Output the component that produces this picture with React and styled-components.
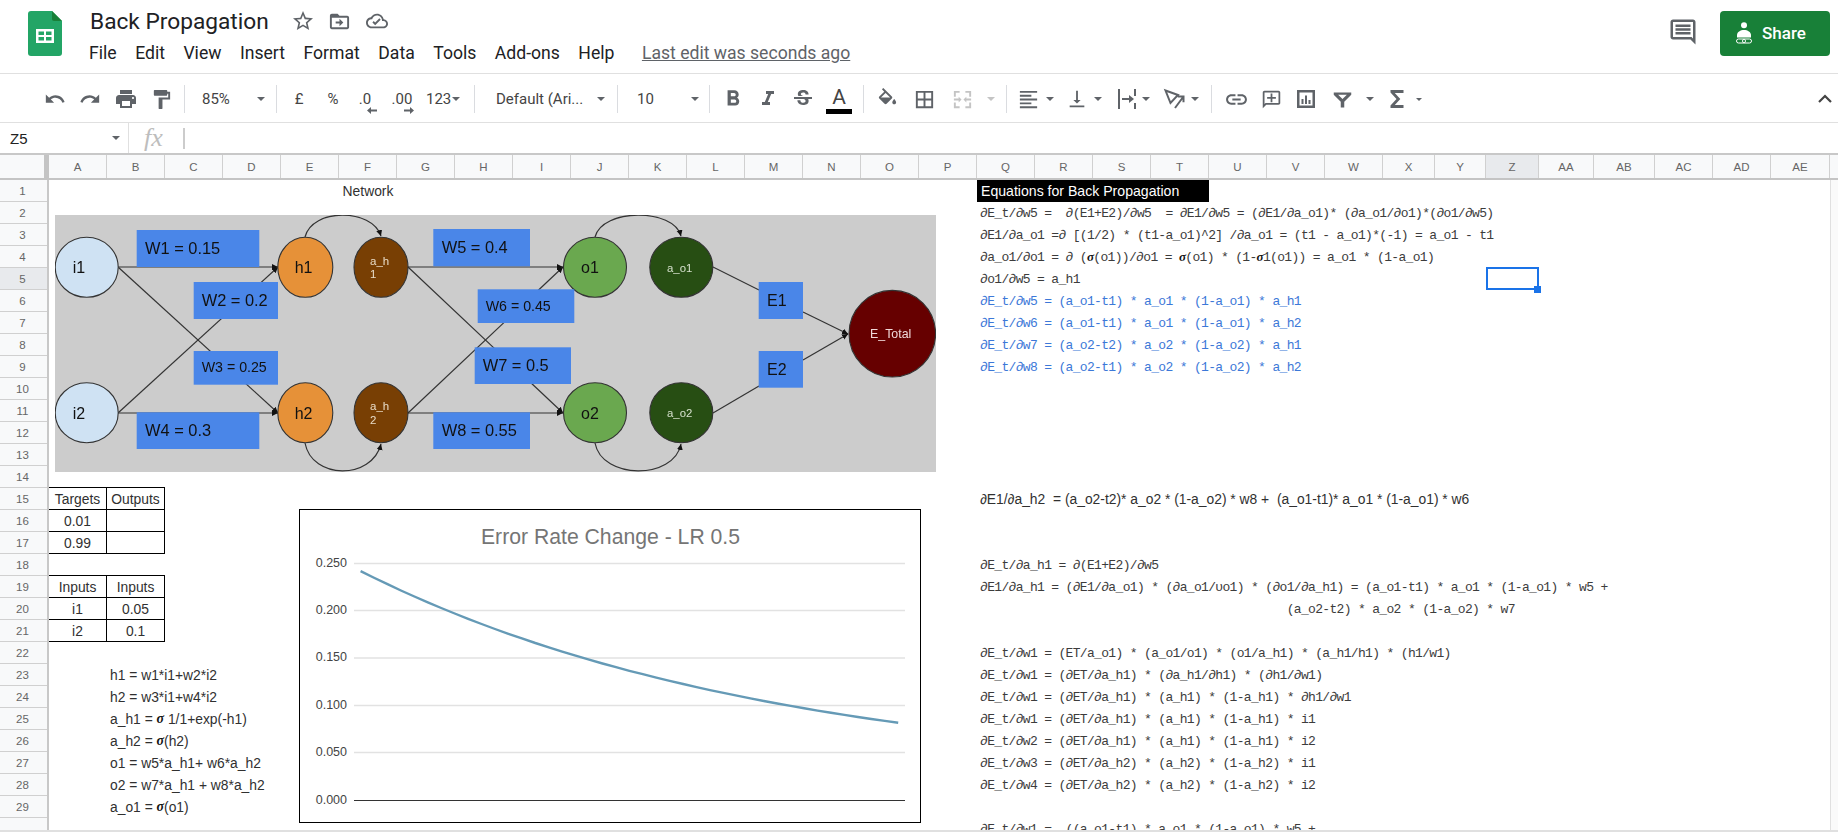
import React from 'react';
import styled, { createGlobalStyle } from 'styled-components';

const Global = createGlobalStyle`
  html, body { margin: 0; padding: 0; background: #fff; overflow: hidden; }
  * { box-sizing: border-box; }
  #root { height: 832px; }
`;

const Page = styled.div`
  width: 1838px; height: 832px; display: flex; flex-direction: column; overflow: hidden;
  font-family: "Liberation Sans", Arial, sans-serif; color: #333;
`;

/* ---------- header ---------- */
const Header = styled.header`
  height: 73px; flex: none; display: flex; align-items: flex-start; padding: 11px 8px 0 28px;
`;
const Logo = styled.svg` width: 34px; height: 45px; flex: none; `;
const TitleBlock = styled.div` margin-left: 27px; margin-top: -3px; display: flex; flex-direction: column; flex: 1; `;
const TitleRow = styled.div` display: flex; align-items: center; height: 24px; margin-top: 1px; `;
const Title = styled.div` font: 400 22.7px Roboto, sans-serif; color: #202124; width: 201px; margin-left: 1px; `;
const HeadIcon = styled.svg` width: ${p => p.$s || 24}px; height: ${p => p.$s || 24}px; fill: #5f6368; margin-right: ${p => p.$mr || 0}px; flex: none; `;
const MenuRow = styled.nav` display: flex; align-items: center; gap: 18.5px; margin-top: 8px; height: 24px; font: 400 17.6px Roboto, sans-serif; color: #202124; `;
const LastEdit = styled.span` color: #5f6368; text-decoration: underline; margin-left: 9px; `;
const CommentBtn = styled.svg` width: 30px; height: 30px; fill: #5f6368; margin: 6px 22px 0 0; flex: none; `;
const ShareBtn = styled.div`
  width: 110px; height: 45px; background: #188038; border-radius: 4px; display: flex; align-items: center;
  padding: 0 0 2px 16px; gap: 10px; color: #fff; font: 500 17px Roboto, sans-serif; flex: none;
`;
const ShareIcon = styled.svg` width: 16px; height: 22px; flex: none; `;

/* ---------- toolbar ---------- */
const Toolbar = styled.div`
  height: 50px; flex: none; display: flex; align-items: center; padding: 2px 4px 0 38px;
  border-top: 1px solid #e0e0e0; border-bottom: 1px solid #e0e0e0;
  color: #444; font: 400 15px Roboto, sans-serif;
`;
const Tool = styled.div` width: ${p => p.$w}px; display: flex; justify-content: center; align-items: center; flex: none; height: 32px; `;
const CaretTool = styled.div` width: ${p => p.$w}px; padding-left: ${p => p.$pad}px; display: flex; align-items: center; gap: ${p => p.$gap}px; flex: none; height: 32px; `;
const Drop = styled.div` width: ${p => p.$w}px; padding: 0 ${p => p.$r}px 0 ${p => p.$l}px; display: flex; align-items: center; justify-content: space-between; flex: none; height: 32px; white-space: nowrap; `;
const Sep = styled.div` width: 1px; height: 28px; background: #dadce0; margin: 0 5px; flex: none; `;
const Icon = styled.svg` width: ${p => p.$s || 24}px; height: ${p => p.$s || 24}px; fill: ${p => p.$c || '#5f6368'}; flex: none; `;
const StrokeIcon = styled.svg` width: 24px; height: 24px; fill: none; stroke: #5f6368; stroke-width: 2; flex: none; `;
const Caret = styled.span`
  width: 0; height: 0; flex: none; border-left: ${p => p.$s || 4.5}px solid transparent; border-right: ${p => p.$s || 4.5}px solid transparent;
  border-top: ${p => p.$s || 4.5}px solid ${p => p.$c || '#5f6368'};
`;
const ToolText = styled.span` color: #444; `;
const Deci = styled.div` position: relative; color: #444; line-height: 16px; margin-top: -1px; `;
const DeciArrow = styled.svg` position: absolute; right: ${p => p.$right}px; top: 16px; width: 10px; height: 7px; fill: #5f6368; `;
const ColorA = styled.div` display: flex; flex-direction: column; align-items: center; width: 26px; `;
const ColorLetter = styled.span` font: 400 21px Roboto, sans-serif; line-height: 21px; color: #444; margin-top: 2px; `;
const ColorBar = styled.span` width: 26px; height: 5px; background: #000; margin-top: 1px; `;
const Collapse = styled.svg` width: 18px; height: 18px; margin-left: auto; fill: none; stroke: #444; stroke-width: 2.2; `;

/* ---------- formula bar ---------- */
const FormulaBar = styled.div` height: 30px; flex: none; display: flex; align-items: center; position: relative; `;
const NameBox = styled.div`
  width: 129px; height: 100%; padding: 0 8px 0 10px; display: flex; align-items: center; justify-content: space-between;
  border-right: 1px solid #e0e0e0; font-size: 15px; color: #222; flex: none;
`;
const Fx = styled.div` font: italic 400 26px "Liberation Serif", serif; color: #bdbdbd; width: 54px; padding-left: 15px; `;
const FxLine = styled.div` width: 2px; height: 21px; background: #ccc; `;

/* ---------- column headers ---------- */
const COLS = [...'ABCDEFGHIJKLMNOPQRSTUVWXYZ', 'AA', 'AB', 'AC', 'AD', 'AE'];
const WIDTHS = COLS.map((c, i) => (i < 23 ? 58 : [52, 51, 53, 55, 61, 58, 58, 59][i - 23]));
const TEMPLATE = WIDTHS.map(w => `${w}px`).join(' ');

const ColumnHeader = styled.div`
  height: 27px; flex: none; display: flex; background: #f8f9fa;
  border-top: 2px solid #c8c8c8; border-bottom: 2px solid #c4c4c4;
`;
const Corner = styled.div` width: 49px; flex: none; border-right: 5px solid #c4c4c4; `;
const ColumnCells = styled.div` display: grid; grid-template-columns: ${TEMPLATE}; flex: none; `;
const ColCell = styled.div`
  border-right: 1px solid #d0d0d0; display: flex; align-items: center; justify-content: center;
  font-size: 11.5px; color: #666; background: ${p => (p.$active ? '#e8eaed' : 'transparent')};
`;

/* ---------- sheet ---------- */
const Body = styled.div` flex: 1; display: flex; min-height: 0; overflow: hidden; border-bottom: 2px solid #e0e0e0; `;
const RowHeader = styled.div` width: 49px; flex: none; display: flex; flex-direction: column; background: #f8f9fa; border-right: 2px solid #c8c8c8; `;
const RowCell = styled.div`
  height: 22px; flex: none; border-bottom: 1px solid #d0d0d0; display: flex; align-items: center; justify-content: center;
  font-size: 11.5px; color: #666; padding-right: 2px; background: ${p => (p.$active ? '#e8eaed' : 'transparent')};
`;
const Canvas = styled.div`
  position: relative; display: grid; grid-template-columns: ${TEMPLATE}; grid-auto-rows: 22px; flex: none; width: 1781px;
`;
const Scroll = styled.div` flex: 1; border-left: 1px solid #e0e0e0; background: #fafafa; `;

const Cell = styled.div`
  grid-column: ${p => p.$c}; grid-row: ${p => p.$r}; min-width: 0; white-space: pre; display: flex; align-items: center;
  font-size: 13.85px; color: #303030; padding-left: 3px;
`;
const CenterCell = styled(Cell)` justify-content: center; padding-left: 0; `;
const BoxCell = styled(CenterCell)`
  border-right: 1px solid #000; border-bottom: 1px solid #000;
  box-shadow: ${p => (p.$top ? '0 -1px 0 #000' : 'none')};
`;
const BannerCell = styled(Cell)`
  grid-column: ${p => p.$c} / span 4; background: #000; color: #fff; padding-left: 4px; font-size: 14.1px;
`;
const MonoCell = styled(Cell)`
  font-family: "Liberation Mono", monospace; font-size: 13px; letter-spacing: -0.67px; color: ${p => (p.$blue ? '#3c78d8' : '#3c3c3c')};
`;
const Sigma = styled.b` font-style: italic; color: #111; font-family: "Liberation Serif", serif; `;
const Selected = styled.div`
  grid-column: ${p => p.$c}; grid-row: ${p => p.$r}; position: relative; margin: -1px 0 0 0; border: 2px solid #1a73e8;
  &::after { content: ''; position: absolute; right: -4px; bottom: -5px; width: 7px; height: 7px; background: #1a73e8; }
`;
const Diagram = styled.svg`
  position: absolute; left: 6px; top: 35px; width: 881px; height: 257px; filter: blur(0.4px);
  font-family: "Liberation Sans", sans-serif;
`;
const ChartFrame = styled.svg`
  position: absolute; left: 250px; top: 329px; width: 622px; height: 314px; background: #fff; border: 1px solid #000;
  font-family: "Liberation Sans", sans-serif;
`;

const P = {
  undo: 'M12.5 8c-2.65 0-5.05.99-6.9 2.6L2 7v9h9l-3.62-3.62c1.39-1.16 3.16-1.88 5.12-1.88 3.54 0 6.55 2.31 7.6 5.5l2.37-.78C21.08 11.03 17.15 8 12.5 8z',
  redo: 'M18.4 10.6C16.55 8.99 14.15 8 11.5 8c-4.65 0-8.58 3.03-9.96 7.22L3.9 16c1.05-3.19 4.05-5.5 7.6-5.5 1.95 0 3.73.72 5.12 1.88L13 16h9V7l-3.6 3.6z',
  print: 'M19 8H5c-1.66 0-3 1.34-3 3v6h4v4h12v-4h4v-6c0-1.66-1.34-3-3-3zm-3 11H8v-5h8v5zm3-7c-.55 0-1-.45-1-1s.45-1 1-1 1 .45 1 1-.45 1-1 1zm-1-9H6v4h12V3z',
  paint: 'M18 4V3c0-.55-.45-1-1-1H5c-.55 0-1 .45-1 1v4c0 .55.45 1 1 1h12c.55 0 1-.45 1-1V6h1v4H9v11c0 .55.45 1 1 1h2c.55 0 1-.45 1-1v-9h8V4h-3z',
  bold: 'M15.6 10.79c.97-.67 1.65-1.77 1.65-2.79 0-2.26-1.75-4-4-4H7v14h7.04c2.09 0 3.71-1.7 3.71-3.79 0-1.52-.86-2.82-2.15-3.42zM10 6.5h3c.83 0 1.5.67 1.5 1.5s-.67 1.5-1.5 1.5h-3v-3zm3.5 9H10v-3h3.5c.83 0 1.5.67 1.5 1.5s-.67 1.5-1.5 1.5z',
  italic: 'M10 4v3h2.21l-3.42 8H6v3h8v-3h-2.21l3.42-8H18V4z',
  strike: 'M6.85 7.08C6.85 4.37 9.45 3 12.24 3c1.64 0 3 .49 3.9 1.28.77.65 1.46 1.73 1.46 3.24h-3.01c0-.31-.05-.59-.15-.85-.29-.86-1.2-1.28-2.25-1.28-1.86 0-2.34 1.02-2.34 1.7 0 .48.25.88.74 1.21.38.25.77.48 1.41.7H7.39c-.21-.34-.54-.89-.54-1.92zM21 12v-2H3v2h9.62c1.15.45 1.96.75 1.96 1.97 0 1-.81 1.67-2.28 1.67-1.54 0-2.93-.54-2.93-2.51H6.4c0 .55.08 1.13.24 1.58.81 2.29 3.29 3.3 5.67 3.3 2.27 0 5.3-.89 5.3-4.05 0-.3-.01-1.16-.48-1.94H21V12z',
  fill: 'M16.56 8.94L7.62 0 6.21 1.41l2.38 2.38-5.15 5.15c-.59.59-.59 1.54 0 2.12l5.5 5.5c.29.29.68.44 1.06.44s.77-.15 1.06-.44l5.5-5.5c.59-.58.59-1.53 0-2.12zM5.21 10L10 5.21 14.79 10H5.21zM19 11.5s-2 2.17-2 3.5c0 1.1.9 2 2 2s2-.9 2-2c0-1.33-2-3.5-2-3.5z',
  borders: 'M3 3v18h18V3H3zm8 16H5v-6h6v6zm0-8H5V5h6v6zm8 8h-6v-6h6v6zm0-8h-6V5h6v6z',
  merge: 'M3 3h6v2H5v4H3z M15 3h6v6h-2V5h-4z M3 15h2v4h4v2H3z M19 15h2v6h-6v-2h4z M3 11h5V9l3 3-3 3v-2H3z M21 11h-5V9l-3 3 3 3v-2h5z',
  align: 'M15 15H3v2h12v-2zm0-8H3v2h12V7zM3 13h18v-2H3v2zm0 8h18v-2H3v2zM3 3v2h18V3H3z',
  valign: 'M16 13h-3V3h-2v10H8l4 4 4-4zM4 19v2h16v-2H4z',
  wrap: 'M3 2h2v20H3z M19 2h2v7h-2z M19 16h2v6h-2z M7 11h7V8l5 4-5 4v-3H7z',
  rotate: 'M2.500 3.500L15 8l-7.500 8z M12 21L20.500 9.500 M14.800 9.500h5.700v5.700',
  link: 'M3.9 12c0-1.71 1.39-3.1 3.1-3.1h4V7H7c-2.76 0-5 2.24-5 5s2.24 5 5 5h4v-1.9H7c-1.71 0-3.1-1.39-3.1-3.1zM8 13h8v-2H8v2zm9-6h-4v1.9h4c1.71 0 3.1 1.39 3.1 3.1s-1.39 3.1-3.1 3.1h-4V17h4c2.76 0 5-2.24 5-5s-2.24-5-5-5z',
  addComment: 'M20 2H4c-1.1 0-2 .9-2 2v18l4-4h14c1.1 0 2-.9 2-2V4c0-1.1-.9-2-2-2zm0 14H5.17L4 17.17V4h16v12z M13 5h-2v4H7v2h4v4h2v-4h4V9h-4z',
  chart: 'M3 3h18v18H3z M5.500 5.500v13h13v-13z M7.500 12h2v5h-2z M11 8.500h2V17h-2z M14.500 13h2v4h-2z',
  filter: 'M2 4h20v2.500l-8 8V21h-4v-6.500l-8-8z M7 6.500l5 5 5-5z',
  sigma: 'M18.500 3H5.500v2.500L11.500 12l-6 6.500V21h13v-3H9.800l5.500-6-5.500-6h8.700z',
  star: 'M22 9.24l-7.19-.62L12 2 9.19 8.63 2 9.24l5.46 4.73L5.82 21 12 17.27 18.18 21l-1.63-7.03L22 9.24zM12 15.4l-3.76 2.27 1-4.28-3.32-2.88 4.38-.38L12 6.1l1.71 4.04 4.38.38-3.32 2.88 1 4.28L12 15.4z',
  folder: 'M20 6h-8l-2-2H4c-1.1 0-2 .9-2 2v12c0 1.1.9 2 2 2h16c1.1 0 2-.9 2-2V8c0-1.1-.9-2-2-2zm0 12H4V8h16v10z M12 17l4-4-4-4v3H8v2h4z',
  cloud: 'M19.35 10.04C18.67 6.59 15.64 4 12 4 9.11 4 6.6 5.64 5.35 8.04 2.34 8.36 0 10.91 0 14c0 3.31 2.69 6 6 6h13c2.76 0 5-2.24 5-5 0-2.64-2.05-4.78-4.65-4.96zM19 18H6c-2.21 0-4-1.79-4-4s1.79-4 4-4h.71C7.37 7.69 9.48 6 12 6c3.04 0 5.5 2.46 5.5 5.5v.5H19c1.66 0 3 1.34 3 3s-1.34 3-3 3z M10 16.500l-3-3 1.400-1.400 1.600 1.600 4.600-4.600 1.400 1.400z',
  comment: 'M22 4c0-1.1-.9-2-2-2H4c-1.1 0-2 .9-2 2v12c0 1.1.9 2 2 2h14l4 4V4zm-2 13.17L18.83 16H4V4h16v13.17zM6 12h12v2H6zm0-3h12v2H6zm0-3h12v2H6z',
};
const Ic = ({ d, s, c, evenodd }) => (
  <Icon viewBox="0 0 24 24" $s={s} $c={c}><path d={d} fillRule={evenodd ? 'evenodd' : 'nonzero'} /></Icon>
);

const ROW = { stroke: '#333', strokeWidth: 1.2 };
const ELLIPSES = [
  [86.7, 267.3, 31.5, 30, '#cfe2f3'], [86.7, 412.7, 31.5, 30, '#cfe2f3'],
  [305.3, 267.3, 27.5, 30, '#e69138'], [305.3, 412.7, 27.5, 30, '#e69138'],
  [381, 267.3, 27, 30, '#783f04'], [381, 412.7, 27, 30, '#783f04'],
  [595, 267.3, 31.5, 30, '#6aa84f'], [595, 412.7, 31.5, 30, '#6aa84f'],
  [681.3, 267.3, 31.5, 30, '#274e13'], [681.3, 412.7, 31.5, 30, '#274e13'],
  [892.3, 333.7, 43.3, 43.3, '#660000'],
];
const LINES = [
  [118, 267, 278, 267, 1], [118, 267, 278, 413, 1], [118, 413, 278, 267, 1], [118, 413, 278, 413, 1],
  [408, 267, 563, 267, 1], [408, 267, 563, 413, 1], [408, 413, 563, 267, 1], [408, 413, 563, 413, 1],
  [713, 267, 759, 290, 0], [713, 413, 759, 386, 0], [803, 312, 848, 334, 1], [803, 360, 848, 334, 1],
];
const ARCS = [
  'M305 237 C 312 208, 372 208, 381 236', 'M595 237 C 602 208, 674 208, 681 236',
  'M305 443 C 312 480, 372 480, 381 444', 'M595 443 C 602 480, 674 480, 681 444',
];
const BOXES = [
  [136.7, 230, 122.6, 37], [193.7, 282, 84.3, 37], [193.7, 351, 84.3, 33.7], [136.7, 412.3, 122.6, 36.7],
  [433.3, 229, 96.7, 37.3], [477.7, 289.3, 96.6, 33.7], [474.7, 347.3, 96.3, 36.7], [433.3, 412.3, 96.7, 36.7],
  [758.7, 282, 44.3, 37], [758.7, 351, 44.3, 36.7],
];
const LABELS = [
  [145, 248, 'W1 = 0.15', 16.4], [201.7, 300, 'W2 = 0.2', 16.4], [201.7, 367.3, 'W3 = 0.25', 14.2], [145, 430, 'W4 = 0.3', 16.4],
  [441.7, 247.3, 'W5 = 0.4', 16.4], [485.7, 305.7, 'W6 = 0.45', 14.2], [482.7, 365.3, 'W7 = 0.5', 16.4], [441.7, 430, 'W8 = 0.55', 16.4],
  [72.7, 267.5, 'i1', 16], [72.7, 413, 'i2', 16], [294.7, 267.5, 'h1', 16], [294.7, 413, 'h2', 16],
  [581, 267.5, 'o1', 16], [581, 413, 'o2', 16], [767, 300, 'E1', 16], [767, 369, 'E2', 16],
  [370, 260.7, 'a_h', 11.5, '#e8dcc8'], [370, 274.3, '1', 11.5, '#e8dcc8'], [370, 406, 'a_h', 11.5, '#e8dcc8'], [370, 420, '2', 11.5, '#e8dcc8'],
  [667, 267.5, 'a_o1', 11.4, '#d5e0cc'], [667, 413, 'a_o2', 11.4, '#d5e0cc'], [870, 334, 'E_Total', 12.4, '#f0d8d8'],
];

const NetworkDiagram = () => (
  <Diagram viewBox="55 215 881 257">
    <defs>
      <marker id="ah" markerWidth="7" markerHeight="7" refX="6" refY="3" orient="auto" markerUnits="userSpaceOnUse">
        <path d="M0 0 L6 3 L0 6 z" fill="#111" />
      </marker>
    </defs>
    <rect x="55" y="215" width="881" height="257" fill="#cccccc" />
    {LINES.map(([a, b, c, d, arrow], i) => (
      <line key={i} x1={a} y1={b} x2={c} y2={d} {...ROW} markerEnd={arrow ? 'url(#ah)' : undefined} />
    ))}
    {ARCS.map(d => <path key={d} d={d} fill="none" {...ROW} markerEnd="url(#ah)" />)}
    {ELLIPSES.map(([cx, cy, rx, ry, f], i) => <ellipse key={i} cx={cx} cy={cy} rx={rx} ry={ry} fill={f} stroke="#333" strokeWidth="1.1" />)}
    {BOXES.map(([x, y, w, h], i) => <rect key={i} x={x} y={y} width={w} height={h} fill="#4a86e8" />)}
    {LABELS.map(([x, y, t, fs, f]) => (
      <text key={t + x + y} x={x} y={y} fontSize={fs} fill={f || '#111'} dominantBaseline="central">{t}</text>
    ))}
  </Diagram>
);

/* error curve: value = 0.022 + 0.22 * exp(-1.3 t), plotted on the chart's own axis */
const curvePath = Array.from({ length: 41 }, (_, i) => {
  const t = i / 40;
  const v = 0.022 + 0.22 * Math.exp(-1.3 * t);
  return `${(360.6 + 537.6 * t).toFixed(1)},${(800.5 - v * 948).toFixed(1)}`;
}).join(' ');
const TICKS = [['0.250', 563.5], ['0.200', 610.5], ['0.150', 658], ['0.100', 705.5], ['0.050', 752.5]];

const ErrorChart = () => (
  <ChartFrame viewBox="300 510 620 312">
    <text x="610.500" y="536" fontSize="21.200" fill="#757575" textAnchor="middle" dominantBaseline="central">Error Rate Change - LR 0.5</text>
    {TICKS.map(([t, y]) => (
      <g key={t}>
        <line x1="354" x2="905" y1={y} y2={y} stroke="#e2e2e2" strokeWidth="1.600" />
        <text x="347" y={y - 1} fontSize="12.500" fill="#444" textAnchor="end" dominantBaseline="central">{t}</text>
      </g>
    ))}
    <line x1="354" x2="905" y1="800.500" y2="800.500" stroke="#333" strokeWidth="1.200" />
    <text x="347" y="799.500" fontSize="12.500" fill="#444" textAnchor="end" dominantBaseline="central">0.000</text>
    <polyline points={curvePath} fill="none" stroke="#659ab6" strokeWidth="2.400" strokeLinejoin="round" />
  </ChartFrame>
);

const S = () => <Sigma>σ</Sigma>;
const MONO = [
  [2, '∂E_t/∂w5 =  ∂(E1+E2)/∂w5  = ∂E1/∂w5 = (∂E1/∂a_o1)* (∂a_o1/∂o1)*(∂o1/∂w5)'],
  [3, '∂E1/∂a_o1 =∂ [(1/2) * (t1-a_o1)^2] /∂a_o1 = (t1 - a_o1)*(-1) = a_o1 - t1'],
  [4, <>∂a_o1/∂o1 = ∂ (<S />(o1))/∂o1 = <S />(o1) * (1-<S />1(o1)) = a_o1 * (1-a_o1)</>],
  [5, '∂o1/∂w5 = a_h1'],
  [6, '∂E_t/∂w5 = (a_o1-t1) * a_o1 * (1-a_o1) * a_h1', 1],
  [7, '∂E_t/∂w6 = (a_o1-t1) * a_o1 * (1-a_o1) * a_h2', 1],
  [8, '∂E_t/∂w7 = (a_o2-t2) * a_o2 * (1-a_o2) * a_h1', 1],
  [9, '∂E_t/∂w8 = (a_o2-t1) * a_o2 * (1-a_o2) * a_h2', 1],
  [18, '∂E_t/∂a_h1 = ∂(E1+E2)/∂w5'],
  [19, '∂E1/∂a_h1 = (∂E1/∂a_o1) * (∂a_o1/υo1) * (∂o1/∂a_h1) = (a_o1-t1) * a_o1 * (1-a_o1) * w5 +'],
  [20, '                                           (a_o2-t2) * a_o2 * (1-a_o2) * w7'],
  [22, '∂E_t/∂w1 = (ET/a_o1) * (a_o1/o1) * (o1/a_h1) * (a_h1/h1) * (h1/w1)'],
  [23, '∂E_t/∂w1 = (∂ET/∂a_h1) * (∂a_h1/∂h1) * (∂h1/∂w1)'],
  [24, '∂E_t/∂w1 = (∂ET/∂a_h1) * (a_h1) * (1-a_h1) * ∂h1/∂w1'],
  [25, '∂E_t/∂w1 = (∂ET/∂a_h1) * (a_h1) * (1-a_h1) * i1'],
  [26, '∂E_t/∂w2 = (∂ET/∂a_h1) * (a_h1) * (1-a_h1) * i2'],
  [27, '∂E_t/∂w3 = (∂ET/∂a_h2) * (a_h2) * (1-a_h2) * i1'],
  [28, '∂E_t/∂w4 = (∂ET/∂a_h2) * (a_h2) * (1-a_h2) * i2'],
  [30, '∂E_t/∂w1 =  ((a_o1-t1) * a_o1 * (1-a_o1) * w5 +'],
];
const FORMULAS = [
  [23, 'h1 = w1*i1+w2*i2'], [24, 'h2 = w3*i1+w4*i2'], [25, <>a_h1 = <S /> 1/1+exp(-h1)</>], [26, <>a_h2 = <S />(h2)</>],
  [27, 'o1 = w5*a_h1+ w6*a_h2'], [28, 'o2 = w7*a_h1 + w8*a_h2'], [29, <>a_o1 = <S />(o1)</>],
];
const TABLE = [
  [15, 'Targets', 'Outputs', 1], [16, '0.01', ''], [17, '0.99', ''],
  [19, 'Inputs', 'Inputs', 1], [20, 'i1', '0.05'], [21, 'i2', '0.1'],
];

export default function App() {
  return (
    <Page>
      <Global />
      <Header>
        <Logo viewBox="0 0 34 45">
          <path d="M3 0h21l10 10v32a3 3 0 0 1-3 3H3a3 3 0 0 1-3-3V3a3 3 0 0 1 3-3z" fill="#23a566" />
          <path d="M24 0l10 10H26a2 2 0 0 1-2-2z" fill="#188038" />
          <path d="M8 18h18v14H8z M10.500 20.500v3.500h5.500v-3.500z M18 20.500v3.500h5.500v-3.500z M10.500 26v3.500h5.500V26z M18 26v3.500h5.500V26z" fill="#fff" fillRule="evenodd" />
        </Logo>
        <TitleBlock>
          <TitleRow>
            <Title>Back Propagation</Title>
            <HeadIcon viewBox="0 0 24 24" $s={24} $mr={13}><path d={P.star} /></HeadIcon>
            <HeadIcon viewBox="0 0 24 24" $s={23} $mr={15}><path d={P.folder} /></HeadIcon>
            <HeadIcon viewBox="0 0 24 24" $s={22}><path d={P.cloud} /></HeadIcon>
          </TitleRow>
          <MenuRow>
            <span>File</span><span>Edit</span><span>View</span><span>Insert</span><span>Format</span><span>Data</span>
            <span>Tools</span><span>Add-ons</span><span>Help</span>
            <LastEdit>Last edit was seconds ago</LastEdit>
          </MenuRow>
        </TitleBlock>
        <CommentBtn viewBox="0 0 24 24"><path d={P.comment} /></CommentBtn>
        <ShareBtn>
          <ShareIcon viewBox="0 0 16 22" fill="#fff">
            <circle cx="8" cy="3.200" r="3" />
            <path d="M1 15.500V13c0-3 3.500-5 7-5s7 2 7 5v2.500z" />
            <rect x="0.500" y="17" width="9" height="4" rx="2" fill="none" stroke="#fff" />
            <rect x="6.500" y="17" width="9" height="4" rx="2" fill="none" stroke="#fff" />
          </ShareIcon>
          Share
        </ShareBtn>
      </Header>

      <Toolbar>
        <Tool $w={34}><Ic d={P.undo} s={22} /></Tool>
        <Tool $w={36}><Ic d={P.redo} s={22} /></Tool>
        <Tool $w={36}><Ic d={P.print} s={24} /></Tool>
        <Tool $w={35}><Ic d={P.paint} s={23} /></Tool>
        <Sep />
        <Drop $w={81} $l={12} $r={6}><ToolText>85%</ToolText><Caret /></Drop>
        <Sep />
        <Tool $w={34}><ToolText>£</ToolText></Tool>
        <Tool $w={34}><ToolText>%</ToolText></Tool>
        <Tool $w={30}><Deci>.0<DeciArrow $right={-6} viewBox="0 0 10 7"><path d="M4 0v2.500h6v2H4V7L0 3.500z" /></DeciArrow></Deci></Tool>
        <Tool $w={44}><Deci>.00<DeciArrow $right={-2} viewBox="0 0 10 7"><path d="M6 0v2.500H0v2h6V7l4-3.500z" /></DeciArrow></Deci></Tool>
        <CaretTool $w={45} $pad={2} $gap={1}><ToolText>123</ToolText><Caret /></CaretTool>
        <Sep />
        <Drop $w={132} $l={16} $r={7}><ToolText>Default (Ari...</ToolText><Caret /></Drop>
        <Sep />
        <Drop $w={81} $l={14} $r={5}><ToolText>10</ToolText><Caret /></Drop>
        <Sep />
        <Tool $w={35}><Ic d={P.bold} s={26} /></Tool>
        <Tool $w={36}><Ic d={P.italic} s={24} /></Tool>
        <Tool $w={34}><Ic d={P.strike} s={24} /></Tool>
        <Tool $w={38}><ColorA><ColorLetter>A</ColorLetter><ColorBar /></ColorA></Tool>
        <Sep />
        <Tool $w={37}><Ic d={P.fill} s={23} /></Tool>
        <Tool $w={37}><Ic d={P.borders} s={23} /></Tool>
        <CaretTool $w={58} $pad={8} $gap={13}><Ic d={P.merge} s={23} c="#c4c4c4" /><Caret $c="#c4c4c4" /></CaretTool>
        <Sep />
        <CaretTool $w={47} $pad={5} $gap={6}><Ic d={P.align} s={23} /><Caret /></CaretTool>
        <CaretTool $w={49} $pad={7} $gap={6}><Ic d={P.valign} s={22} /><Caret /></CaretTool>
        <CaretTool $w={48} $pad={7} $gap={3}><Ic d={P.wrap} s={24} /><Caret /></CaretTool>
        <CaretTool $w={50} $pad={7} $gap={4}>
          <StrokeIcon viewBox="0 0 24 24"><path d={P.rotate} /></StrokeIcon><Caret />
        </CaretTool>
        <Sep />
        <Tool $w={39}><Ic d={P.link} s={25} /></Tool>
        <Tool $w={31}><Ic d={P.addComment} s={21} /></Tool>
        <Tool $w={38}><Ic d={P.chart} s={24} evenodd /></Tool>
        <CaretTool $w={52} $pad={7} $gap={13}><Ic d={P.filter} s={21} evenodd /><Caret /></CaretTool>
        <CaretTool $w={50} $pad={8} $gap={7}><Ic d={P.sigma} s={24} /><Caret $s={3} /></CaretTool>
        <Collapse viewBox="0 0 18 18"><path d="M3 12l6-6 6 6" /></Collapse>
      </Toolbar>

      <FormulaBar>
        <NameBox>Z5<Caret $s={4} /></NameBox>
        <Fx>fx</Fx>
        <FxLine />
      </FormulaBar>

      <ColumnHeader>
        <Corner />
        <ColumnCells>
          {COLS.map(c => <ColCell key={c} $active={c === 'Z'}>{c}</ColCell>)}
        </ColumnCells>
      </ColumnHeader>

      <Body>
        <RowHeader>
          {Array.from({ length: 30 }, (_, i) => (
            <RowCell key={i} $active={i === 4}>{i < 29 ? i + 1 : ''}</RowCell>
          ))}
        </RowHeader>
        <Canvas>
          <CenterCell $c={6} $r={1}>Network</CenterCell>
          <BannerCell $c={17} $r={1}>Equations for Back Propagation</BannerCell>
          {MONO.map(([r, t, blue]) => <MonoCell key={r} $c={17} $r={r} $blue={blue}>{t}</MonoCell>)}
          <Cell $c={17} $r={15}>∂E1/∂a_h2  = (a_o2-t2)* a_o2 * (1-a_o2) * w8 +  (a_o1-t1)* a_o1 * (1-a_o1) * w6</Cell>
          {TABLE.map(([r, a, b, top]) => (
            <React.Fragment key={r}>
              <BoxCell $c={1} $r={r} $top={top}>{a}</BoxCell>
              <BoxCell $c={2} $r={r} $top={top}>{b}</BoxCell>
            </React.Fragment>
          ))}
          {FORMULAS.map(([r, t]) => <Cell key={r} $c={2} $r={r}>{t}</Cell>)}
          <Selected $c={26} $r={5} />
          <NetworkDiagram />
          <ErrorChart />
        </Canvas>
        <Scroll />
      </Body>
    </Page>
  );
}
